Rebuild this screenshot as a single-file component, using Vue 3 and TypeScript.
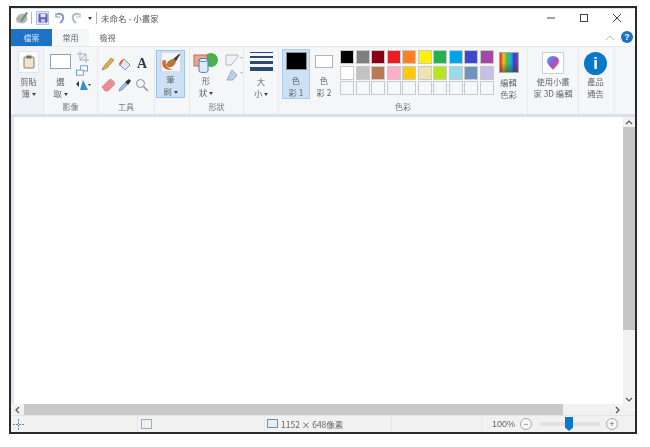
<script setup lang="ts">
const paletteRows: string[][] = [
  ['#000000', '#7f7f7f', '#880015', '#ed1c24', '#ff7f27', '#fff200', '#22b14c', '#00a2e8', '#3f48cc', '#a349a4'],
  ['#ffffff', '#c3c3c3', '#b97a57', '#ffaec9', '#ffc90e', '#efe4b0', '#b5e61d', '#99d9ea', '#7092be', '#c8bfe7'],
  ['', '', '', '', '', '', '', '', '', ''],
]
const sizeLines = [1, 2, 3, 4]
</script>

<template>
  <div class="window">
    <header class="titlebar">
      <svg class="app-icon" viewBox="0 0 14 14" width="14" height="14">
        <path d="M1 9c0-4 4-7 8-6 3 1 4 4 3 6-1 3-4 4-7 3-2 0-4-1-4-3z" fill="#a8bcc4" />
        <path d="M5 10 11 1l2 1-6 9z" fill="#7d8f5a" />
        <circle cx="4" cy="8" r="1.2" fill="#d8a23c" />
      </svg>
      <span class="qa-sep"></span>
      <span class="qa-save">
        <svg viewBox="0 0 10 10" width="10" height="10">
          <rect x="0.5" y="0.5" width="9" height="9" rx="1" fill="#6a5bb8" />
          <rect x="2.5" y="1" width="5" height="3.2" fill="#e9e6f6" />
          <rect x="3" y="6" width="4" height="3.5" fill="#c8c2e8" />
        </svg>
      </span>
      <svg class="qa-undo" viewBox="0 0 12 12" width="12" height="12" fill="none" stroke="#8a97c8" stroke-width="2">
        <path d="M3 2c4-1 7 1 6 5-.4 1.600-1.500 3-3 4" />
        <path d="M2 1v4h4" stroke-width="1.200" />
      </svg>
      <svg class="qa-redo" viewBox="0 0 12 12" width="12" height="12" fill="none" stroke="#b4b8bf" stroke-width="2">
        <path d="M9 2C5 1 2 3 3 7c.4 1.600 1.500 3 3 4" />
        <path d="M10 1v4H6" stroke-width="1.200" />
      </svg>
      <span class="qa-more"></span>
      <span class="qa-sep qa-sep-2"></span>
      <span class="title">未命名 - 小畫家</span>
      <div class="win-controls">
        <svg viewBox="0 0 10 10" width="10" height="10"><path d="M1 5h8" stroke="#444" /></svg>
        <svg viewBox="0 0 10 10" width="10" height="10"><rect x="1.500" y="1.500" width="7" height="7" fill="none" stroke="#444" /></svg>
        <svg viewBox="0 0 10 10" width="10" height="10"><path d="M1 1l8 8M9 1l-8 8" stroke="#444" /></svg>
      </div>
    </header>

    <nav class="tabs">
      <span class="tab tab-file">檔案</span>
      <span class="tab tab-active">常用</span>
      <span class="tab">檢視</span>
      <svg class="collapse" viewBox="0 0 10 6" width="10" height="6"><path d="M1 5l4-4 4 4" fill="none" stroke="#b5bcc4" /></svg>
      <span class="help">?</span>
    </nav>

    <section class="ribbon">
      <div class="group group-clip">
        <div class="group-body clip-body">
          <div class="clip-btn">
            <svg viewBox="0 0 12 14" width="12" height="14">
              <rect x="1" y="2" width="10" height="11" rx="1" fill="#f1e3cc" stroke="#8a7a60" />
              <rect x="3.500" y="0.500" width="5" height="3" fill="#6d6d6d" />
            </svg>
          </div>
          <div class="label">剪貼<br />簿 <i class="caret"></i></div>
        </div>
        <div class="group-name">&nbsp;</div>
      </div>

      <div class="group group-image">
        <div class="group-body image-body">
          <div class="select-col">
            <span class="select-rect"></span>
            <div class="label">選<br />取 <i class="caret"></i></div>
          </div>
          <div class="image-tools">
            <svg class="crop" viewBox="0 0 12 12" width="12" height="12" fill="none" stroke="#9fb0c4"><path d="M3 0v9h9M0 3h9v9M3 9l6-6" /></svg>
            <svg viewBox="0 0 14 12" width="12" height="11" fill="#fff" stroke="#5f8fc0"><rect x="5.500" y="0.500" width="8" height="6" /><rect x="0.500" y="5.500" width="8" height="6" /></svg>
            <svg class="rotate" viewBox="0 0 16 12" width="16" height="12">
              <path d="M8 1l5 10H5z" fill="#2f8fd0" />
              <path d="M1 5l3-3v6z" fill="#333" />
              <path d="M13 5h3l-1.500 2z" fill="#444" />
            </svg>
          </div>
        </div>
        <div class="group-name">影像</div>
      </div>

      <div class="group group-tools">
        <div class="group-body tool-grid">
          <svg viewBox="0 0 14 14" width="14" height="14"><path d="M1 13l2-4 7-8 3 2-7 8z" fill="#d9b15c" stroke="#8a6d2c" stroke-width=".6" /></svg>
          <svg viewBox="0 0 14 14" width="14" height="14">
            <path d="M6 2l6 6-5 5-6-6z" fill="#dfe8f2" stroke="#7d95b0" />
            <path d="M5 2C3 3 1 5 1 9c2-1 3-3 4-5z" fill="#e8663c" />
          </svg>
          <span class="tool-a">A</span>
          <svg viewBox="0 0 14 14" width="14" height="14"><path d="M1 9l7-7c1-1 2-1 3 0l2 2c1 1 1 2 0 3l-6 6H4z" fill="#ec8b97" stroke="#c9707c" stroke-width=".6" /></svg>
          <svg viewBox="0 0 14 14" width="14" height="14"><path d="M1 13l1-3 5-5 2 2-5 5z" fill="#8fc3e8" stroke="#4d7fa6" stroke-width=".6" /><path d="M7 4l4-3 2 2-3 4z" fill="#30333a" /></svg>
          <svg viewBox="0 0 14 14" width="14" height="14" fill="none" stroke="#8b8f96"><circle cx="5.500" cy="5.500" r="4" fill="#f2f7fc" /><path d="M8.500 8.500l4.500 4.500" stroke-width="1.500" /></svg>
        </div>
        <div class="group-name">工具</div>
      </div>

      <div class="group group-brush">
        <div class="group-body">
          <div class="brush-btn">
            <svg class="brush-icon" viewBox="0 0 24 24" width="24" height="24">
              <rect width="24" height="24" fill="#f3f5f7" stroke="#b8c4d0" />
              <path d="M2 10c-2 7 2 13 12 11-6-1-9-5-8-11z" fill="#e8632a" />
              <path d="M6 16c1-5 5-7 9-8l3 3c-1 5-5 8-9 7z" fill="#b07a3e" />
              <path d="M15 8l7-6 1 1-5 8z" fill="#3a3f46" />
            </svg>
            <div class="label">筆<br />刷 <i class="caret"></i></div>
          </div>
        </div>
        <div class="group-name">&nbsp;</div>
      </div>

      <div class="group group-shapes">
        <div class="group-body shapes-body">
          <div class="shapes-col">
            <svg viewBox="0 0 26 22" width="26" height="22">
              <circle cx="18" cy="8" r="7" fill="#4caf50" />
              <rect x="1" y="3" width="13" height="11" fill="#eda58c" stroke="#c9694a" />
              <path d="M6 8c0-2 9-2 9 0v11c0 2-9 2-9 0z" fill="#dceaf7" stroke="#3f7fbf" />
              <ellipse cx="10.500" cy="8" rx="4.500" ry="1.500" fill="#f4f9fd" stroke="#3f7fbf" />
            </svg>
            <div class="label">形<br />狀 <i class="caret"></i></div>
          </div>
          <div class="shape-tools">
            <svg viewBox="0 0 18 12" width="18" height="12"><path d="M1 1h12v2L6 11H1z" fill="#eef2f6" stroke="#aeb8c4" /><path d="M15 3h3l-1.500 2z" fill="#bbb" /></svg>
            <svg viewBox="0 0 18 12" width="18" height="12"><path d="M7 1l5 5-4 5H2z" fill="#b8cfe6" stroke="#93aecb" /><path d="M15 3h3l-1.500 2z" fill="#bbb" /></svg>
          </div>
        </div>
        <div class="group-name">形狀</div>
      </div>

      <div class="group group-size">
        <div class="group-body size-body">
          <div class="size-lines">
            <span v-for="n in sizeLines" :key="n" class="size-line" :class="'size-' + n"></span>
          </div>
          <div class="label">大<br />小 <i class="caret"></i></div>
        </div>
        <div class="group-name">&nbsp;</div>
      </div>

      <div class="group group-colors">
        <div class="group-body colors-body">
          <div class="color-btn color-active">
            <span class="swatch swatch-1"></span>
            <div class="label">色<br />彩 1</div>
          </div>
          <div class="color-btn">
            <span class="swatch swatch-2"></span>
            <div class="label">色<br />彩 2</div>
          </div>
          <div class="palette">
            <template v-for="(row, r) in paletteRows" :key="r">
              <span
                v-for="(c, i) in row"
                :key="i"
                class="cell"
                :style="c ? { backgroundColor: c } : {}"
              ></span>
            </template>
          </div>
          <div class="edit-col">
            <span class="rainbow"></span>
            <div class="label">編輯<br />色彩</div>
          </div>
        </div>
        <div class="group-name">色彩</div>
      </div>

      <div class="group group-p3d">
        <div class="group-body center-body">
          <span class="p3d-icon">
            <svg viewBox="0 0 14 16" width="14" height="16">
              <defs>
                <linearGradient id="drop" x1="0" y1="0" x2="1" y2="1">
                  <stop offset="0" stop-color="#35b8e8" />
                  <stop offset=".5" stop-color="#a04fd0" />
                  <stop offset="1" stop-color="#f0683c" />
                </linearGradient>
              </defs>
              <path d="M7 1c4 0 6 3 6 5 0 4-5 7-6 9C6 13 1 10 1 6c0-2 2-5 6-5z" fill="url(#drop)" />
            </svg>
          </span>
          <div class="label">使用小畫<br />家 3D 編輯</div>
        </div>
        <div class="group-name">&nbsp;</div>
      </div>

      <div class="group group-info">
        <div class="group-body center-body">
          <span class="info-icon">i</span>
          <div class="label">產品<br />通告</div>
        </div>
        <div class="group-name">&nbsp;</div>
      </div>
    </section>

    <div class="ribbon-edge"></div>

    <main class="workspace">
      <div class="left-strip"></div>
      <div class="canvas"></div>
      <div class="vscroll">
        <span class="arrow-btn"><svg viewBox="0 0 8 5" width="8" height="5"><path d="M1 4l3-3 3 3" fill="none" stroke="#555" stroke-width="1.200" /></svg></span>
        <div class="vtrack"><div class="vthumb"></div></div>
        <span class="arrow-btn"><svg viewBox="0 0 8 5" width="8" height="5"><path d="M1 1l3 3 3-3" fill="none" stroke="#555" stroke-width="1.200" /></svg></span>
      </div>
    </main>

    <div class="hscroll">
      <span class="arrow-btn h"><svg viewBox="0 0 5 8" width="5" height="8"><path d="M4 1L1 4l3 3" fill="none" stroke="#555" stroke-width="1.200" /></svg></span>
      <div class="hthumb"></div>
      <div class="htrack"></div>
      <span class="arrow-btn h"><svg viewBox="0 0 5 8" width="5" height="8"><path d="M1 1l3 3-3 3" fill="none" stroke="#555" stroke-width="1.200" /></svg></span>
      <span class="corner"></span>
    </div>

    <footer class="statusbar">
      <div class="st st-move">
        <svg viewBox="0 0 11 11" width="11" height="11" fill="none" stroke="#6f8296"><path d="M5.500 0v11M0 5.500h11" stroke-dasharray="2 1" /></svg>
      </div>
      <div class="st st-sel">
        <svg viewBox="0 0 11 10" width="11" height="10"><rect x=".5" y=".5" width="10" height="9" fill="#eef2f6" stroke="#a3abb3" /></svg>
      </div>
      <div class="st st-size">
        <svg viewBox="0 0 11 10" width="11" height="10"><rect x=".5" y=".5" width="10" height="8" fill="#e2eefa" stroke="#6d8fb0" /></svg>
        <span>1152 × 648像素</span>
      </div>
      <div class="st st-empty"></div>
      <div class="st st-zoom">
        <span class="zoom-value">100%</span>
        <span class="zoom-btn">−</span>
        <div class="slider"><span class="slider-thumb"></span></div>
        <span class="zoom-btn">+</span>
      </div>
    </footer>
  </div>
</template>

<style>
html,
body {
  background: #fff;
}
</style>

<style scoped>
.window {
  box-sizing: border-box;
  width: 628px;
  height: 428px;
  margin: 6px 0 0 9px;
  border: 2px solid #2a2a2a;
  background: #fff;
  font-family: "Noto Sans CJK TC", "Noto Sans", sans-serif;
  color: #666;
  display: flex;
  flex-direction: column;
  filter: blur(0.5px);
}

/* title bar */
.titlebar {
  height: 21px;
  display: flex;
  align-items: center;
  padding: 0 0 2px 4px;
  background: #fff;
  border-top: 1px solid #d5e6f5;
  box-sizing: border-box;
}
.qa-sep {
  width: 1px;
  height: 12px;
  background: #b5b5b5;
  margin: 0 4px 0 2px;
}
.qa-sep-2 {
  margin: 0 4px 0 4px;
}
.qa-save {
  width: 13px;
  height: 14px;
  display: flex;
  align-items: center;
  justify-content: center;
  background: #dbe8f6;
  border: 1px solid #a9c6e4;
  box-sizing: border-box;
}
.qa-undo {
  margin-left: 5px;
}
.qa-redo {
  margin-left: 4px;
}
.qa-more {
  margin-left: 6px;
  width: 0;
  height: 0;
  border-left: 2px solid transparent;
  border-right: 2px solid transparent;
  border-top: 3px solid #444;
}
.title {
  font-size: 8.500px;
  color: #555;
}
.win-controls {
  margin-left: auto;
  display: flex;
  gap: 23px;
  padding-right: 13px;
}

/* tabs */
.tabs {
  height: 17px;
  display: flex;
  align-items: stretch;
  position: relative;
}
.tab {
  width: 37px;
  font-size: 8px;
  line-height: 17px;
  text-align: center;
}
.tab-file {
  width: 41px;
  background: #1b72c6;
  color: #cfe4f7;
}
.tab-active {
  background: #f4f6f8;
  color: #666;
}
.collapse {
  margin: 6px 0 0 auto;
}
.help {
  margin: 2px 2px 0 6px;
  width: 12px;
  height: 12px;
  border-radius: 50%;
  background: #1b72c6;
  color: #fff;
  font: bold 9px/12px "Liberation Sans", sans-serif;
  text-align: center;
}

/* ribbon */
.ribbon {
  height: 68px;
  display: flex;
  padding: 0 0 0 3px;
  background: #f4f6f8;
  border-top: 1px solid #e6e9ed;
  box-sizing: border-box;
}
.group {
  display: flex;
  flex-direction: column;
  border-right: 1px solid #e6e9ed;
  box-sizing: border-box;
  flex: none;
}
.group-body {
  height: 54px;
  box-sizing: border-box;
}
.group-name {
  flex: 1;
  font-size: 8px;
  line-height: 12px;
  text-align: center;
  color: #777;
}
.label {
  font-size: 8.300px;
  line-height: 12px;
  text-align: center;
  color: #666;
  white-space: nowrap;
}
.caret {
  display: inline-block;
  width: 0;
  height: 0;
  border-left: 2px solid transparent;
  border-right: 2px solid transparent;
  border-top: 3px solid #444;
  vertical-align: 1px;
}

.group-clip {
  width: 30px;
  background: #eef2f7;
}
.clip-body {
  padding: 4px 4px 0;
}
.clip-btn {
  height: 22px;
  display: flex;
  align-items: center;
  justify-content: center;
  background: #fafbfc;
  border: 1px solid #dfe5ec;
  box-sizing: border-box;
  margin-bottom: 2px;
}

.group-image {
  width: 54px;
}
.image-body {
  display: flex;
  padding: 7px 0 0 6px;
}
.select-col {
  width: 21px;
}
.select-rect {
  display: block;
  width: 21px;
  height: 15px;
  background: #fff;
  border: 1px solid #8fa3b8;
  box-sizing: border-box;
  margin-bottom: 6px;
}
.image-tools {
  margin: -3px 0 0 5px;
  display: flex;
  flex-direction: column;
  align-items: flex-start;
  gap: 2px;
}
.crop {
  margin-left: 1px;
}
.rotate {
  margin: 1px 0 0 -1px;
}

.group-tools {
  width: 57px;
}
.tool-grid {
  display: grid;
  grid-template-columns: repeat(3, 14px);
  column-gap: 3px;
  row-gap: 7px;
  padding: 10px 0 0 3px;
  align-content: start;
  justify-items: center;
}
.tool-a {
  font: bold 14px/14px "Liberation Serif", serif;
  color: #2c3e58;
}

.group-brush {
  width: 35px;
}
.brush-btn {
  margin: 3px 0 0 1px;
  width: 29px;
  height: 48px;
  background: #cde1f6;
  border: 1px solid #9dc3e8;
  box-sizing: border-box;
  display: flex;
  flex-direction: column;
  align-items: center;
}
.brush-icon {
  display: block;
  margin-top: 1px;
  margin-bottom: 1px;
}

.group-shapes {
  width: 54px;
}
.shapes-body {
  display: flex;
  padding: 5px 0 0 3px;
}
.shapes-col {
  width: 26px;
}
.shapes-col svg {
  display: block;
}
.shape-tools {
  margin: 2px 0 0 6px;
  display: flex;
  flex-direction: column;
  gap: 3px;
}

.group-size {
  width: 35px;
}
.size-body {
  padding: 5px 0 0;
}
.size-lines {
  width: 23px;
  height: 19px;
  margin: 0 auto 4px;
  display: flex;
  flex-direction: column;
  justify-content: space-between;
}
.size-line {
  display: block;
  background: #2c4a70;
}
.size-1 {
  height: 1px;
}
.size-2 {
  height: 2px;
}
.size-3 {
  height: 3px;
}
.size-4 {
  height: 4px;
}

.group-colors {
  width: 249px;
}
.colors-body {
  display: flex;
  padding: 2px 0 0 3px;
}
.color-btn {
  width: 28px;
  height: 50px;
  box-sizing: border-box;
  border: 1px solid transparent;
  display: flex;
  flex-direction: column;
  align-items: center;
  padding-top: 3px;
}
.color-active {
  background: #cde1f6;
  border-color: #a9cbec;
  padding-top: 2px;
}
.swatch {
  display: block;
  box-sizing: border-box;
}
.swatch-1 {
  width: 21px;
  height: 22px;
  background: #000;
  border: 1px solid #8e8e8e;
  margin-bottom: 4px;
}
.swatch-2 {
  width: 18px;
  height: 18px;
  background: #fff;
  border: 1px solid #b5b5b5;
  margin: 2px 0 6px;
}
.palette {
  margin: 1px 0 0 2px;
  display: grid;
  grid-template-columns: repeat(10, 14px);
  grid-auto-rows: 14px;
  column-gap: 1.500px;
  row-gap: 1.500px;
  align-content: start;
}
.cell {
  box-sizing: border-box;
  border: 1px solid #c9c9c9;
  background: #f6f7f8;
}
.edit-col {
  margin-left: 3px;
  width: 24px;
  display: flex;
  flex-direction: column;
  align-items: center;
}
.rainbow {
  display: block;
  width: 20px;
  height: 21px;
  margin: 3px 0 3px;
  border: 1px solid #aaa;
  box-sizing: border-box;
  background:
    linear-gradient(to bottom, rgba(255, 255, 255, 0) 50%, rgba(60, 60, 60, 0.55)),
    linear-gradient(to right, #e5232a, #f0c020, #3fbf3f, #20b0e0, #3040c8, #b030b0);
}

.group-p3d {
  width: 51px;
}
.group-info {
  width: 36px;
  padding-right: 2px;
}
.center-body {
  padding-top: 5px;
  display: flex;
  flex-direction: column;
  align-items: center;
}
.p3d-icon {
  width: 22px;
  height: 22px;
  margin-bottom: 1px;
  box-sizing: border-box;
  background: #fff;
  border: 1px solid #cfcfcf;
  display: flex;
  align-items: center;
  justify-content: center;
}
.info-icon {
  width: 23px;
  height: 23px;
  border-radius: 50%;
  background: #0a78c8;
  color: #fff;
  font: bold 17px/23px "Liberation Sans", sans-serif;
  text-align: center;
}

.ribbon-edge {
  height: 3px;
  background: #d7e0eb;
}

/* canvas + scrollbars */
.workspace {
  height: 287px;
  display: flex;
}
.left-strip {
  width: 3px;
  background: #dce7f3;
}
.canvas {
  flex: 1;
  background: #fff;
}
.vscroll {
  width: 12px;
  display: flex;
  flex-direction: column;
  background: #f1f1f1;
}
.arrow-btn {
  height: 10px;
  flex: none;
  display: flex;
  align-items: center;
  justify-content: center;
}
.arrow-btn.h {
  width: 12px;
  height: 11px;
}
.vtrack {
  flex: 1;
}
.vthumb {
  height: 203px;
  background: #c6c6c6;
}
.hscroll {
  height: 11px;
  display: flex;
  background: #f1f1f1;
}
.hthumb {
  width: 539px;
  margin-left: 1px;
  background: #c8c8c8;
}
.htrack {
  flex: 1;
}
.corner {
  width: 12px;
  background: #f1f1f1;
}

/* status bar */
.statusbar {
  flex: 1;
  display: flex;
  background: #f1f1f1;
  border-top: 1px solid #e4e4e4;
  box-sizing: border-box;
  font-size: 8.500px;
  color: #666;
}
.st {
  display: flex;
  align-items: center;
  box-sizing: border-box;
  border-right: 1px solid #e6e6e6;
}
.st-move {
  width: 127px;
  padding-left: 2px;
}
.st-sel {
  width: 127px;
  padding-left: 3px;
}
.st-size {
  width: 127px;
  padding-left: 2px;
  gap: 3px;
  white-space: nowrap;
}
.st-empty {
  width: 90px;
}
.st-zoom {
  flex: 1;
  border-right: 0;
  padding-left: 10px;
}
.zoom-value {
  width: 26px;
  font-family: "Liberation Sans", sans-serif;
  font-size: 9px;
}
.zoom-btn {
  width: 12px;
  height: 12px;
  margin-left: 2px;
  border-radius: 50%;
  border: 1px solid #a9a9a9;
  box-sizing: border-box;
  font: 9px/10px "Liberation Sans", sans-serif;
  text-align: center;
  background: #f7f7f7;
}
.slider {
  width: 61px;
  height: 4px;
  margin: 0 4px 0 7px;
  background: #e2e2e2;
  position: relative;
}
.slider-thumb {
  position: absolute;
  left: 26px;
  top: -5px;
  width: 8px;
  height: 14px;
  background: #0a78c8;
  clip-path: polygon(0 0, 100% 0, 100% 75%, 50% 100%, 0 75%);
}
</style>
